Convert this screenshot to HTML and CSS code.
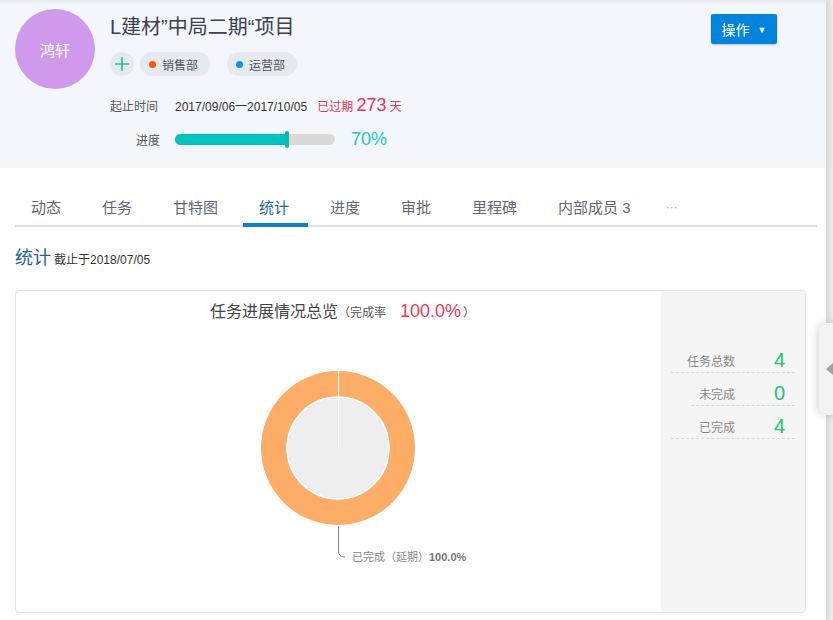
FILE: index.html
```html
<!DOCTYPE html>
<html lang="zh-CN">
<head>
<meta charset="utf-8">
<title>项目统计</title>
<link rel="stylesheet" href="styles.css">
</head>
<body>
<div class="page">
  <header class="header">
    <div class="avatar">鸿轩</div>
    <div class="info">
      <h1 class="title">L建材”中局二期“项目</h1>
      <div class="tags">
        <span class="add-btn">
          <svg width="14" height="14" viewBox="0 0 14 14"><path d="M7 0V14M0 7H14" stroke="#1fbf9c" stroke-width="1.6" fill="none"/></svg>
        </span>
        <span class="tag"><i class="dot dot-orange"></i>销售部</span>
        <span class="tag tag-gap"><i class="dot dot-blue"></i>运营部</span>
      </div>
      <div class="meta-row date-row">
        <span class="meta-label">起止时间</span>
        <span class="date">2017/09/06一2017/10/05</span>
        <span class="overdue">已过期 <b class="overdue-num">273</b> 天</span>
      </div>
      <div class="meta-row progress-row">
        <span class="meta-label">进度</span>
        <div class="bar"><div class="bar-fill" style="width:70%"></div><span class="bar-handle"></span></div>
        <span class="percent">70%</span>
      </div>
    </div>
    <button class="op-btn">操作 <span class="caret">▼</span></button>
  </header>

  <nav class="tabs">
    <span class="tab">动态</span>
    <span class="tab">任务</span>
    <span class="tab">甘特图</span>
    <span class="tab active">统计</span>
    <span class="tab">进度</span>
    <span class="tab">审批</span>
    <span class="tab">里程碑</span>
    <span class="tab">内部成员 3</span>
    <span class="tab more">···</span>
  </nav>

  <div class="section-title"><span class="st-main">统计</span><span class="st-sub">截止于2018/07/05</span></div>

  <div class="card">
    <div class="chart">
      <div class="chart-title">任务进展情况总览<span class="ct-small">（完成率</span><span class="ct-rate">100.0%</span><span class="ct-small ct-end">）</span></div>
      <svg class="donut" width="645" height="280" viewBox="0 0 645 280">
        <circle cx="322" cy="124" r="64" fill="none" stroke="#fdad66" stroke-width="26"/>
        <circle cx="322" cy="124" r="51" fill="#eeeeee" stroke="#ffffff" stroke-width="1.5"/>
        <line x1="322.5" y1="46" x2="322.5" y2="124" stroke="#ffffff" stroke-width="1.2"/>
        <path d="M322.5 202 V227 Q322.5 233 329 233" fill="none" stroke="#888" stroke-width="1"/>
        <text x="336" y="237" class="lbl">已完成（延期）<tspan class="lbl-b">100.0%</tspan></text>
      </svg>
    </div>
    <div class="stats">
      <div class="stat-row"><span class="stat-label">任务总数</span><span class="stat-val">4</span></div>
      <div class="stat-row stat-row-short"><span class="stat-label">未完成</span><span class="stat-val">0</span></div>
      <div class="stat-row"><span class="stat-label">已完成</span><span class="stat-val">4</span></div>
    </div>
  </div>
</div>
<div class="side-toggle"><span class="side-arrow"></span></div>
</body>
</html>
```
FILE: styles.css
```css
* { box-sizing: border-box; }
html, body { margin: 0; padding: 0; }
body {
  width: 833px;
  height: 620px;
  overflow: hidden;
  background: #ececec;
  font-family: "Liberation Sans", "Noto Sans CJK SC", sans-serif;
  color: #333;
  position: relative;
}
.page {
  width: 826px;
  height: 620px;
  background: #fff;
  box-shadow: 2px 0 6px rgba(0,0,0,0.12);
}
.header {
  height: 168px;
  background: #f3f6fa;
  display: flex;
  align-items: flex-start;
  padding: 9px 0 0 15px;
  box-shadow: inset 0 5px 5px -3px rgba(0,0,0,0.06);
}
.avatar {
  width: 80px;
  height: 80px;
  border-radius: 50%;
  background: #cf9aec;
  color: #fff;
  font-size: 15px;
  display: flex;
  align-items: center;
  justify-content: center;
  flex: none;
  margin-right: 15px;
}
.info { flex: 1; }
.title {
  margin: 4px 0 0;
  font-size: 20px;
  font-weight: normal;
  line-height: 28px;
  color: #3a4150;
}
.tags {
  display: flex;
  align-items: center;
  margin-top: 11px;
  height: 24px;
}
.add-btn {
  width: 24px;
  height: 24px;
  border-radius: 50%;
  background: #e5eaf0;
  display: flex;
  align-items: center;
  justify-content: center;
  margin-right: 6px;
}
.tag {
  height: 24px;
  border-radius: 12px;
  background: #e5eaf0;
  display: flex;
  align-items: center;
  padding: 0 12px 0 9px;
  font-size: 12px;
  color: #555;
}
.tag-gap { margin-left: 17px; }
.dot {
  width: 7px;
  height: 7px;
  border-radius: 50%;
  margin-right: 6px;
}
.dot-orange { background: #ff560a; }
.dot-blue { background: #0a93ec; }
.meta-row {
  display: flex;
  align-items: center;
  height: 20px;
  font-size: 12px;
}
.date-row { margin-top: 19px; }
.progress-row { margin-top: 14px; }
.meta-label {
  width: 50px;
  text-align: right;
  color: #555;
  margin-right: 15px;
}
.meta-label:first-child { text-align: left; }
.progress-row .meta-label { text-align: right; }
.date { color: #333; margin-right: 10px; }
.overdue { color: #f2324e; }
.overdue-num { font-weight: normal; font-size: 18px; }
.bar {
  position: relative;
  width: 160px;
  height: 11px;
  border-radius: 6px;
  background: #d9d9d9;
}
.bar-fill {
  height: 100%;
  border-radius: 6px 0 0 6px;
  background: #00c4bf;
}
.bar-handle {
  position: absolute;
  left: 110px;
  top: -3px;
  width: 4px;
  height: 17px;
  border-radius: 2px;
  background: #00bdb7;
}
.percent {
  margin-left: 16px;
  font-size: 18px;
  color: #1fc8c2;
}
.op-btn {
  flex: none;
  margin: 5px 49px 0 0;
  width: 66px;
  height: 30px;
  border: none;
  border-radius: 2px;
  background: #0084e0;
  color: #fff;
  font-family: inherit;
  font-size: 14px;
  padding: 0;
  box-shadow: 0 1px 2px rgba(0,0,0,0.2);
}
.caret { font-size: 9px; margin-left: 4px; vertical-align: 2px; }

.tabs {
  display: flex;
  gap: 9px;
  margin: 22px 9px 0 15px;
  border-bottom: 2px solid #dde2e8;
}
.tab {
  position: relative;
  height: 35px;
  line-height: 35px;
  padding: 0 16px;
  font-size: 15px;
  color: #5f6876;
}
.tab.active { color: #2267ad; }
.tab.active::after {
  content: "";
  position: absolute;
  left: 0;
  right: -3px;
  bottom: -2px;
  height: 4px;
  background: #0a7fd8;
}
.tab.more { color: #b0b0b0; font-size: 12px; padding: 0 20px; margin-left: -10px; }

.section-title {
  margin: 19px 0 0 15px;
  height: 24px;
  line-height: 24px;
}
.st-main { font-size: 18px; color: #1d5ea3; }
.st-sub { font-size: 12px; color: #333; margin-left: 3px; }

.card {
  margin: 20px 0 0 15px;
  width: 791px;
  height: 323px;
  border: 1px solid #dde6ef;
  border-radius: 4px;
  display: flex;
  overflow: hidden;
}
.chart {
  width: 645px;
  flex: none;
}
.chart-title {
  padding: 8px 0 0 8px;
  height: 33px;
  line-height: 24px;
  text-align: center;
  font-size: 16px;
  color: #444;
}
.ct-small { font-size: 12px; color: #555; }
.ct-rate { font-size: 18px; color: #f5365c; margin-left: 14px; }
.ct-end { margin-left: 2px; }
.donut { display: block; }
.lbl { font-size: 11px; fill: #888; font-family: "Liberation Sans", "Noto Sans CJK SC", sans-serif; }
.lbl-b { font-weight: bold; fill: #777; }

.stats {
  flex: 1;
  background: #f5f5f5;
  padding: 49px 10px 0 10px;
}
.stat-row {
  height: 33px;
  display: flex;
  align-items: flex-end;
  padding-bottom: 0;
  border-bottom: 1px dashed #d8d8d8;
}
.stat-row-short { margin-left: 20px; }
.stat-label {
  width: 64px;
  text-align: right;
  font-size: 12px;
  line-height: 16px;
  margin-bottom: 2px;
  color: #888;
}
.stat-row-short .stat-label { width: 44px; }
.stat-val {
  margin-left: 39px;
  font-size: 20px;
  line-height: 24px;
  margin-bottom: 0;
  color: #21c47b;
}

.side-toggle {
  position: absolute;
  left: 819px;
  top: 323px;
  width: 24px;
  height: 92px;
  border-radius: 8px 0 0 8px;
  background: #f3f3f3;
  box-shadow: -2px 0 8px rgba(0,0,0,0.15);
}
.side-arrow {
  position: absolute;
  left: 7px;
  top: 40px;
  width: 0;
  height: 0;
  border-top: 6px solid transparent;
  border-bottom: 6px solid transparent;
  border-right: 7px solid #a0a0a0;
}
```
